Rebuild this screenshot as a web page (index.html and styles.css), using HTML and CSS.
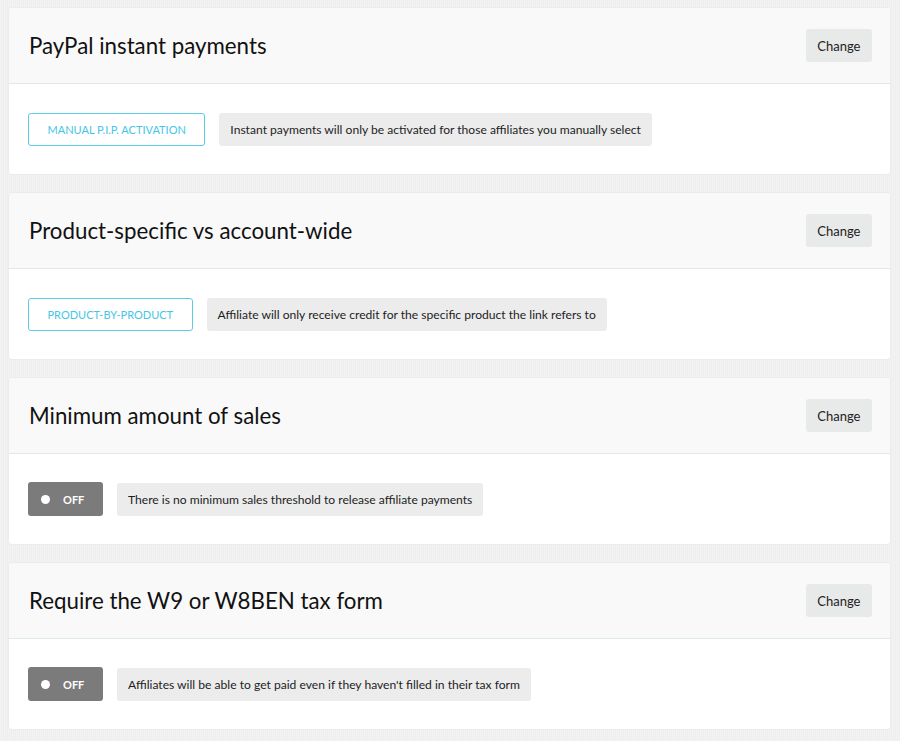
FILE: index.html
```html
<html>
<head>
  <title>Affiliate settings</title>
  <link rel="stylesheet" href="styles.css">
</head>
<body>
  <section id="settings">
    <!-- PayPal -->
    <div class="card">
      <div class="card-head">
        <h2>PayPal instant payments</h2>
        <button class="change">Change</button>
      </div>
      <div class="card-body">
        <span class="mode">MANUAL P.I.P. ACTIVATION</span>
        <span class="note">Instant payments will only be activated for those affiliates you manually select</span>
      </div>
    </div>
    <!-- scope -->
    <div class="card">
      <div class="card-head">
        <h2>Product-specific vs account-wide</h2>
        <button class="change">Change</button>
      </div>
      <div class="card-body">
        <span class="mode">PRODUCT-BY-PRODUCT</span>
        <span class="note">Affiliate will only receive credit for the specific product the link refers to</span>
      </div>
    </div>
    <!-- minimum -->
    <div class="card">
      <div class="card-head">
        <h2>Minimum amount of sales</h2>
        <button class="change">Change</button>
      </div>
      <div class="card-body">
        <span class="toggle"><i class="dot"></i>OFF</span>
        <span class="note">There is no minimum sales threshold to release affiliate payments</span>
      </div>
    </div>
    <!-- tax form -->
    <div class="card">
      <div class="card-head">
        <h2>Require the W9 or W8BEN tax form</h2>
        <button class="change">Change</button>
      </div>
      <div class="card-body">
        <span class="toggle"><i class="dot"></i>OFF</span>
        <span class="note">Affiliates will be able to get paid even if they haven't filled in their tax form</span>
      </div>
    </div>
  </section>
</body>
</html>
```

FILE: styles.css
```css
body {
  margin: 0;
  padding: 8px 10px 8px 9px;
  font: 12px Lato, "Open Sans", sans-serif;
  color: #1d1d1d;
  background: #f1f1f1 repeating-linear-gradient(90deg, #f3f3f3 0, #f3f3f3 1px, #eeeeee 1px, #eeeeee 2px);
}
#settings {
  display: flex;
  flex-direction: column;
  gap: 19px;
}
.card {
  background: #fff;
  border-radius: 3px;
  box-shadow: 0 0 0 1px #ececec;
  overflow: hidden;
}
.card-head {
  height: 75px;
  display: flex;
  align-items: center;
  justify-content: space-between;
  padding: 0 18px 0 20px;
  background: #f9f9f9;
  border-bottom: 1px solid #dfe8ec;
}
.card-head h2 {
  margin: 0;
  font-size: 22.3px;
  font-weight: 400;
  color: #111;
}
.change {
  height: 33px;
  padding: 0 11.5px;
  border: none;
  border-radius: 3px;
  background: #e8e9e9;
  font: 13px Lato, sans-serif;
  color: #222;
}
.card-body {
  height: 90px;
  display: flex;
  align-items: center;
  gap: 14px;
  padding: 0 19px;
}
.mode {
  height: 33px;
  box-sizing: border-box;
  display: flex;
  align-items: center;
  padding: 0 18.5px;
  border: 1px solid #58cce9;
  border-radius: 3px;
  color: #45c6e6;
  font-size: 11px;
}
.note {
  height: 33px;
  display: flex;
  align-items: center;
  padding: 0 11px;
  border-radius: 3px;
  background: #ececec;
  font-size: 12.1px;
}
.toggle {
  width: 75px;
  height: 34px;
  box-sizing: border-box;
  display: flex;
  align-items: center;
  gap: 13px;
  padding-left: 13px;
  border-radius: 3px;
  background: #7b7b7b;
  color: #fff;
  font-size: 11px;
  font-weight: 700;
}
.dot {
  width: 9px;
  height: 9px;
  border-radius: 50%;
  background: #fff;
}
```
